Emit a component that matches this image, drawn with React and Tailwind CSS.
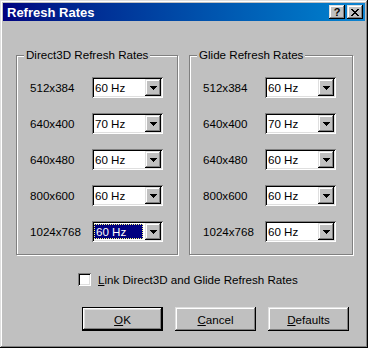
import React from 'react';

const raised =
    'shadow-[inset_-1px_-1px_#000,inset_1px_1px_#dfdfdf,inset_-2px_-2px_#808080,inset_2px_2px_#fff]';
const sunken =
    'shadow-[inset_1px_1px_#808080,inset_-1px_-1px_#fff,inset_2px_2px_#000,inset_-2px_-2px_#dfdfdf]';

const d3dRates = [
    { mode: '512x384', hz: '60 Hz' },
    { mode: '640x400', hz: '70 Hz' },
    { mode: '640x480', hz: '60 Hz' },
    { mode: '800x600', hz: '60 Hz' },
    { mode: '1024x768', hz: '60 Hz', selected: true },
];

const glideRates = [
    { mode: '512x384', hz: '60 Hz' },
    { mode: '640x400', hz: '70 Hz' },
    { mode: '640x480', hz: '60 Hz' },
    { mode: '800x600', hz: '60 Hz' },
    { mode: '1024x768', hz: '60 Hz' },
];

const DownArrow = () => (
    <svg width="7" height="4" viewBox="0 0 7 4" shapeRendering="crispEdges">
        <path d="M0 0h7v1H0z M1 1h5v1H1z M2 2h3v1H2z M3 3h1v1H3z" fill="#000" />
    </svg>
);

const CloseGlyph = () => (
    <svg width="8" height="7" viewBox="0 0 8 7" shapeRendering="crispEdges">
        <path
            d="M0 0h2v1H0z M6 0h2v1H6z M1 1h2v1H1z M5 1h2v1H5z M2 2h4v1H2z M3 3h2v1H3z M2 4h4v1H2z M1 5h2v1H1z M5 5h2v1H5z M0 6h2v1H0z M6 6h2v1H6z"
            fill="#000"
        />
    </svg>
);

const Combo = ({ value, selected }) => (
    <div className={`flex h-[21px] w-[71px] items-center bg-white ${sunken}`}>
        <div className="flex flex-1 items-center pl-[3px]">
            {selected ? (
                <span className="-ml-[1px] flex h-[15px] w-[49px] items-center border border-dotted border-[#ffff80] bg-[#000080] pl-[1px] text-white">
                    {value}
                </span>
            ) : (
                <span>{value}</span>
            )}
        </div>
        <div className={`mr-[2px] flex h-[17px] w-[16px] items-center justify-center bg-[#c0c0c0] ${raised}`}>
            <DownArrow />
        </div>
    </div>
);

const Group = ({ title, rows, width }) => (
    <div
        className={`relative h-[200px] ${width} border border-[#808080] shadow-[inset_1px_1px_#fff,1px_1px_#fff]`}
    >
        {/* caption sits on the etched line */}
        <span className="absolute -top-[8px] left-[7px] bg-[#c0c0c0] px-[2px] leading-[14px]">
            {title}
        </span>
        <div className="flex flex-col gap-[15px] pt-[21px]">
            {rows.map((r) => (
                <div key={r.mode} className="flex items-center">
                    <span className="w-[75px] pl-[13px]">{r.mode}</span>
                    <Combo value={r.hz} selected={r.selected} />
                </div>
            ))}
        </div>
    </div>
);

const Button = ({ children, isDefault }) => (
    <button
        className={`flex h-[24px] w-[81px] items-center justify-center bg-[#c0c0c0] text-black ${
            isDefault
                ? 'border border-black shadow-[inset_-1px_-1px_#000,inset_1px_1px_#fff,inset_-2px_-2px_#808080,inset_2px_2px_#dfdfdf]'
                : raised
        }`}
    >
        {children}
    </button>
);

export default function App() {
    return (
        <div
            className={`flex h-[348px] w-[368px] flex-col bg-[#c0c0c0] p-[3px] font-['Liberation_Sans',Arial,sans-serif] text-[11.6px] text-black ${raised}`}
        >
            {/* Title bar */}
            <div className="flex h-[18px] items-center bg-gradient-to-r from-[#000080] to-[#1084d0] pl-[4px] pr-[2px]">
                <span className="flex-1 text-[13px] font-bold leading-none text-white">Refresh Rates</span>
                <div className="flex gap-[2px]">
                    <div className={`flex h-[14px] w-[16px] items-center justify-center bg-[#c0c0c0] ${raised}`}>
                        <span className="text-[11px] font-bold leading-none">?</span>
                    </div>
                    <div className={`flex h-[14px] w-[16px] items-center justify-center bg-[#c0c0c0] ${raised}`}>
                        <CloseGlyph />
                    </div>
                </div>
            </div>

            {/* Group boxes */}
            <div className="flex gap-[11px] pl-[13px] pt-[34px]">
                <Group title="Direct3D Refresh Rates" rows={d3dRates} width="w-[162px]" />
                <Group title="Glide Refresh Rates" rows={glideRates} width="w-[164px]" />
            </div>

            {/* Link checkbox */}
            <div className="mt-[16px] flex items-center gap-[7px] pl-[75px]">
                <div className={`h-[13px] w-[13px] bg-white ${sunken}`} />
                <span>
                    <span className="underline">L</span>ink Direct3D and Glide Refresh Rates
                </span>
            </div>

            {/* Buttons */}
            <div className="mt-[19px] flex gap-[12px] pl-[79px]">
                <Button isDefault>
                    <span className="underline">O</span>K
                </Button>
                <Button>
                    <span className="underline">C</span>ancel
                </Button>
                <Button>
                    <span className="underline">D</span>efaults
                </Button>
            </div>
        </div>
    );
}
